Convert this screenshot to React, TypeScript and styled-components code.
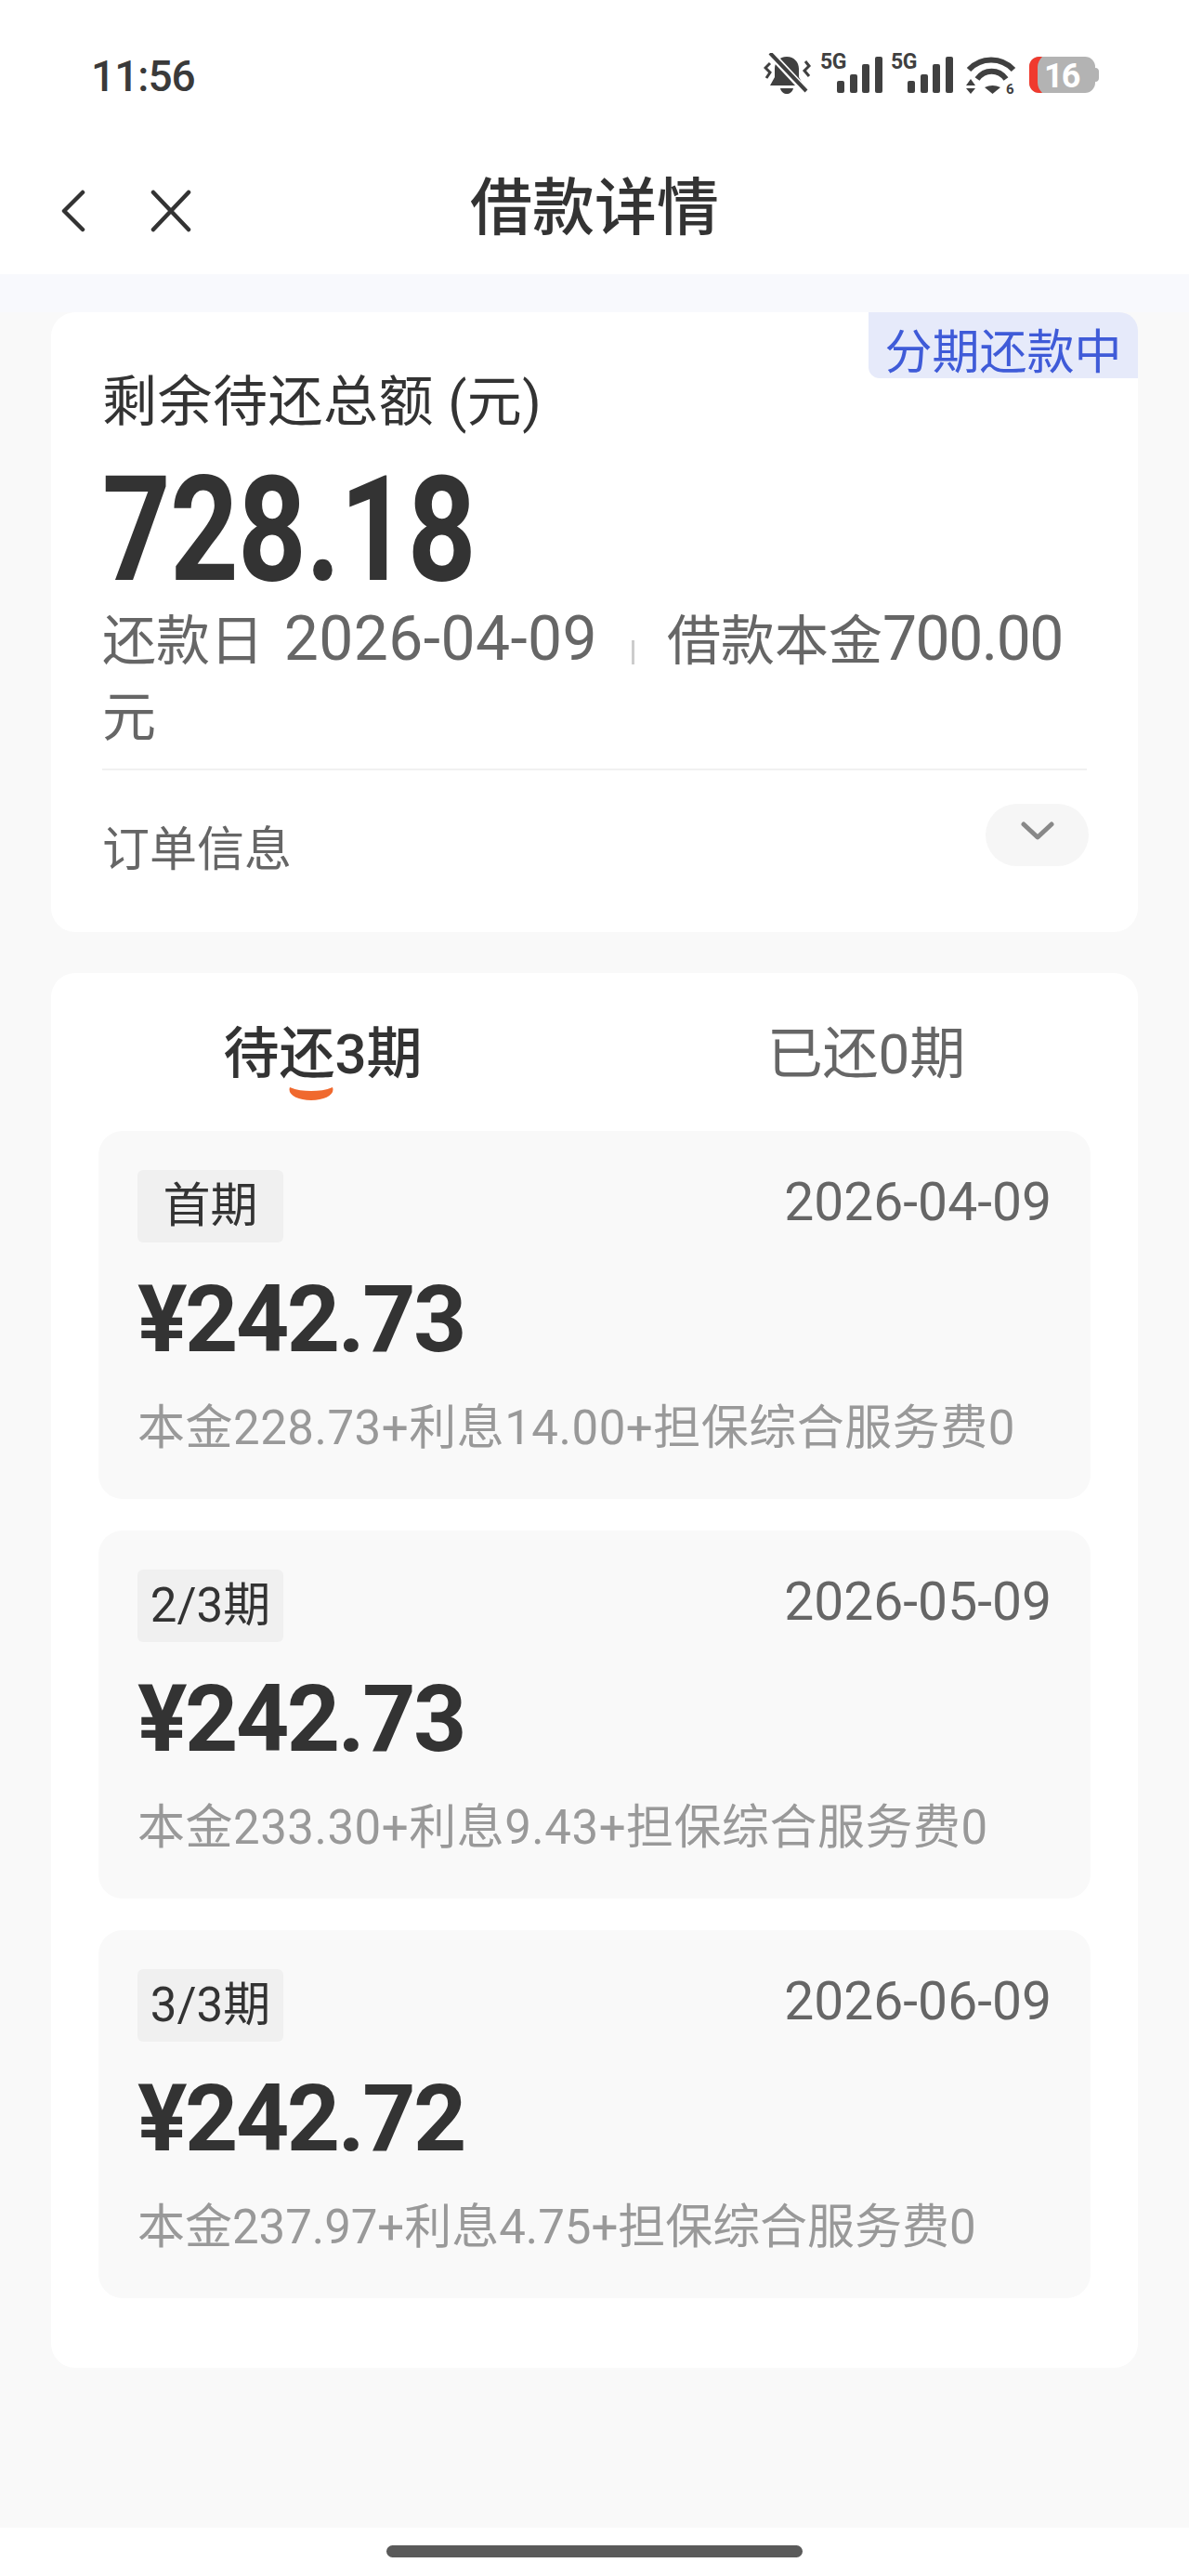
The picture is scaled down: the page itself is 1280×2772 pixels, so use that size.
import React from 'react'
import styled, { createGlobalStyle } from 'styled-components'

const GlobalStyle = createGlobalStyle`
  html, body { margin: 0; padding: 0; background: #fff; }
  * { box-sizing: border-box; }
  body { font-family: Roboto, "Noto Sans CJK SC", sans-serif; color: #333; }
`

const Page = styled.div`
  width: 1280px;
  height: 2772px;
  display: flex;
  flex-direction: column;
  overflow: hidden;
  background: #fff;
`

const Header = styled.header`
  height: 295px;
  flex: none;
  background: #fff;
  display: flex;
  flex-direction: column;
`

const StatusBar = styled.div`
  height: 160px;
  padding: 57px 96px 0 98px;
  display: flex;
  justify-content: space-between;
  align-items: flex-start;
`

const Clock = styled.div`
  font-size: 46px;
  font-weight: 500;
  line-height: 50px;
  color: #3a3a3a;
  letter-spacing: -1px;
`

const StatusIcons = styled.div`
  display: flex;
  gap: 9px;
  align-items: flex-start;
  color: #404040;

  svg:nth-child(n + 4) {
    margin-left: 5px;
  }
`

const SignalSvg = styled.svg`
  margin-top: -6px;
`

const NavBar = styled.nav`
  position: relative;
  height: 124px;
  display: flex;
  align-items: center;
  justify-content: center;
`

const NavIcons = styled.div`
  position: absolute;
  left: 66px;
  top: 44px;
  display: flex;
  gap: 70px;
`

const Title = styled.h1`
  margin: 4px 0 0;
  font-size: 67px;
  font-weight: 500;
  line-height: 80px;
  color: #333;
`

const Main = styled.main`
  flex: 1;
  padding: 41px 55px 0;
  display: flex;
  flex-direction: column;
  gap: 44px;
  background: linear-gradient(#f8f9fd 0, #f8f9fd 41px, #f9f9f9 41px);
`

const Card = styled.section`
  position: relative;
  background: #fff;
  border-radius: 26px;
`

const SummaryCard = styled(Card)`
  padding: 62px 55px 71px;
`

const StatusTag = styled.div`
  position: absolute;
  top: 0;
  right: 0;
  width: 290px;
  height: 71px;
  background: #e6eafa;
  color: #3f5bd8;
  font-size: 51px;
  line-height: 88px;
  text-align: center;
  border-radius: 0 20px 0 12px;
`

const SummaryLabel = styled.div`
  font-size: 59px;
  line-height: 70px;
  letter-spacing: 0.5px;
  color: #333;
`

const Hero = styled.div`
  margin-top: 36px;
  font-size: 157px;
  font-weight: 700;
  line-height: 132px;
  color: #333;
  letter-spacing: -1px;
  transform: scaleX(0.82);
  transform-origin: left center;
`

const DetailText = styled.div`
  margin-top: 13px;
  font-size: 58px;
  line-height: 82px;
  color: #666;
`

const Figure = styled.span<{ $tracking: number; $indent?: number }>`
  font-size: 66px;
  line-height: 0;
  letter-spacing: ${(p) => p.$tracking}px;
  margin-left: ${(p) => p.$indent ?? 0}px;
`

const Pipe = styled.span`
  display: inline-block;
  width: 3px;
  height: 26px;
  margin: 0 35px 0 37px;
  background: #ccc;
  vertical-align: -5px;
`

const Rule = styled.div`
  margin-top: 14px;
  height: 2px;
  background: #f1f1f1;
`

const OrderRow = styled.div`
  margin-top: 36px;
  height: 67px;
  display: flex;
  justify-content: space-between;
  align-items: flex-start;
  font-size: 51px;
  color: #666;
`

const OrderLabel = styled.span`
  line-height: 67px;
  margin-top: 16px;
`

const ExpandPill = styled.div`
  width: 111px;
  height: 67px;
  margin-right: -2px;
  border-radius: 34px;
  background: #f6f6f6;
  display: flex;
  justify-content: center;
  padding-top: 18px;
`

const PlanCard = styled(Card)`
  padding: 53px 51px 75px;
`

const Tabs = styled.div`
  display: grid;
  grid-template-columns: 1fr 1fr;
  margin: 0 -51px 47px;
`

const Tab = styled.div<{ $active?: boolean }>`
  position: relative;
  text-align: center;
  font-size: 60px;
  line-height: 70px;
  font-weight: ${(p) => (p.$active ? 500 : 400)};
  color: ${(p) => (p.$active ? '#333' : '#666')};
`

const TabMark = styled.svg`
  position: absolute;
  left: 50%;
  margin-left: -38px;
  top: 70px;
`

const Installments = styled.div`
  display: flex;
  flex-direction: column;
  gap: 34px;
`

const Installment = styled.article`
  height: 396px;
  padding: 42px 42px 0;
  background: #f9f9f9;
  border-radius: 26px;
`

const InstallmentTop = styled.div`
  display: flex;
  justify-content: space-between;
  align-items: flex-start;
`

const PeriodTag = styled.span`
  width: 157px;
  height: 78px;
  background: #f0f0f0;
  border-radius: 6px;
  text-align: center;
  font-size: 51px;
  line-height: 78px;
  color: #333;
`

const DueDate = styled.span`
  font-size: 57px;
  line-height: 70px;
  color: #666;
`

const Amount = styled.div`
  margin-top: 28px;
  font-size: 100px;
  font-weight: 700;
  line-height: 110px;
  color: #333;
  letter-spacing: -2.5px;
`

const Breakdown = styled.div<{ $tracking: number }>`
  margin-top: 27px;
  font-size: 51px;
  line-height: 70px;
  color: #999;
  letter-spacing: ${(p) => p.$tracking}px;
  white-space: nowrap;
`

const BottomBar = styled.div`
  height: 52px;
  flex: none;
  background: #fff;
  display: flex;
  justify-content: center;
  padding-top: 19px;
`

const HomeIndicator = styled.div`
  width: 448px;
  height: 13px;
  border-radius: 7px;
  background: #5a5a5a;
`

const BellOff = () => (
  <svg width="52" height="46" viewBox="0 0 52 46" fill="none">
    <path d="M25 4c8 0 13 6 13 13v9l5 9H7l5-9V17C12 10 17 4 25 4z" fill="currentColor" />
    <path d="M18 38h14c-1 4-4 6-7 6s-6-2-7-6z" fill="currentColor" />
    <path d="M6 -1l40 43" stroke="#fff" strokeWidth="8" />
    <path d="M7 0l39 41" stroke="currentColor" strokeWidth="4" />
    <path d="M7 11L2 16l5 5-4 6M45 9l4 5-5 5 5 6" stroke="currentColor" strokeWidth="3" />
  </svg>
)

const Signal = () => (
  <SignalSvg width="67" height="52" viewBox="0 -6 67 52">
    <text x="0" y="17" fontFamily="Roboto, sans-serif" fontWeight="700" fontSize="23" letterSpacing="-0.5" fill="currentColor">5G</text>
    <rect x="18" y="30" width="8" height="13" rx="2" fill="currentColor" />
    <rect x="32" y="23" width="8" height="20" rx="2" fill="currentColor" />
    <rect x="45" y="12" width="8" height="31" rx="2" fill="currentColor" />
    <rect x="59" y="4" width="8" height="39" rx="2" fill="currentColor" />
  </SignalSvg>
)

const Wifi = () => (
  <svg width="54" height="50" viewBox="0 0 54 50" fill="none">
    <path d="M3 18C16 4 38 4 51 18" stroke="currentColor" strokeWidth="6" />
    <path d="M12 28c8-11 23-11 31 0" stroke="currentColor" strokeWidth="6" />
    <path d="M20 37q8.500-4 17 0l-8.500 7z" fill="currentColor" />
    <path d="M0 35l5-7 5 7zM0 38l5 6 5-6z" fill="currentColor" />
    <text x="43" y="44" fontFamily="Roboto, sans-serif" fontWeight="700" fontSize="15" fill="currentColor">6</text>
  </svg>
)

const Battery = () => (
  <svg width="76" height="46" viewBox="0 0 76 46">
    <rect x="0" y="4" width="71" height="39" rx="11" fill="#b3b3b3" />
    <path d="M14 4h-3C4 4 0 9 0 15v17c0 6 4 11 11 11h3c-3-3-5-7-5-11V15c0-4 2-8 5-11z" fill="#f03a2e" />
    <path d="M71 16c3 0 4 2 4 4v7c0 2-1 4-4 4z" fill="#b3b3b3" />
    <text x="16" y="37" fontFamily="Roboto, sans-serif" fontWeight="700" fontSize="36" letterSpacing="-2" fill="#fff">16</text>
  </svg>
)

const BackIcon = () => (
  <svg width="26" height="46" viewBox="0 0 26 46" fill="none">
    <path d="M23 3L3 23l20 20" stroke="#333" strokeWidth="4.5" strokeLinecap="round" strokeLinejoin="round" />
  </svg>
)

const CloseIcon = () => (
  <svg width="44" height="46" viewBox="0 0 44 46" fill="none">
    <path d="M3 3l38 40M41 3L3 43" stroke="#333" strokeWidth="4.5" strokeLinecap="round" />
  </svg>
)

const installments = [
  { period: '首期', date: '2026-04-09', amount: '¥242.73', detail: '本金228.73+利息14.00+担保综合服务费0', tracking: 0.5 },
  { period: '2/3期', date: '2026-05-09', amount: '¥242.73', detail: '本金233.30+利息9.43+担保综合服务费0', tracking: 0.5 },
  { period: '3/3期', date: '2026-06-09', amount: '¥242.72', detail: '本金237.97+利息4.75+担保综合服务费0', tracking: -0.05 },
]

const App = () => (
  <Page>
    <GlobalStyle />
    <Header>
      <StatusBar>
        <Clock>11:56</Clock>
        <StatusIcons>
          <BellOff />
          <Signal />
          <Signal />
          <Wifi />
          <Battery />
        </StatusIcons>
      </StatusBar>
      <NavBar>
        <NavIcons>
          <BackIcon />
          <CloseIcon />
        </NavIcons>
        <Title>借款详情</Title>
      </NavBar>
    </Header>
    <Main>
      <SummaryCard>
        <StatusTag>分期还款中</StatusTag>
        <SummaryLabel>剩余待还总额 (元)</SummaryLabel>
        <Hero>728.18</Hero>
        <DetailText>
          还款日<Figure $tracking={0.4} $indent={5}> 2026-04-09</Figure>
          <Pipe />
          借款本金<Figure $tracking={-1.5}>700.00</Figure>元
        </DetailText>
        <Rule />
        <OrderRow>
          <OrderLabel>订单信息</OrderLabel>
          <ExpandPill>
            <svg width="36" height="22" viewBox="0 0 36 22" fill="none">
              <path d="M3 4l15 14L33 4" stroke="#888" strokeWidth="5" strokeLinecap="round" strokeLinejoin="round" />
            </svg>
          </ExpandPill>
        </OrderRow>
      </SummaryCard>
      <PlanCard>
        <Tabs>
          <Tab $active>
            待还3期
            <TabMark width="50" height="14" viewBox="0 0 50 14">
              <path d="M2 0c7 3 15 4 23 4s16-1 23-4c3 8-8 14-23 14S-1 8 2 0z" fill="#f0692e" />
            </TabMark>
          </Tab>
          <Tab>已还0期</Tab>
        </Tabs>
        <Installments>
          {installments.map((item) => (
            <Installment key={item.date}>
              <InstallmentTop>
                <PeriodTag>{item.period}</PeriodTag>
                <DueDate>{item.date}</DueDate>
              </InstallmentTop>
              <Amount>{item.amount}</Amount>
              <Breakdown $tracking={item.tracking}>{item.detail}</Breakdown>
            </Installment>
          ))}
        </Installments>
      </PlanCard>
    </Main>
    <BottomBar>
      <HomeIndicator />
    </BottomBar>
  </Page>
)

export default App
